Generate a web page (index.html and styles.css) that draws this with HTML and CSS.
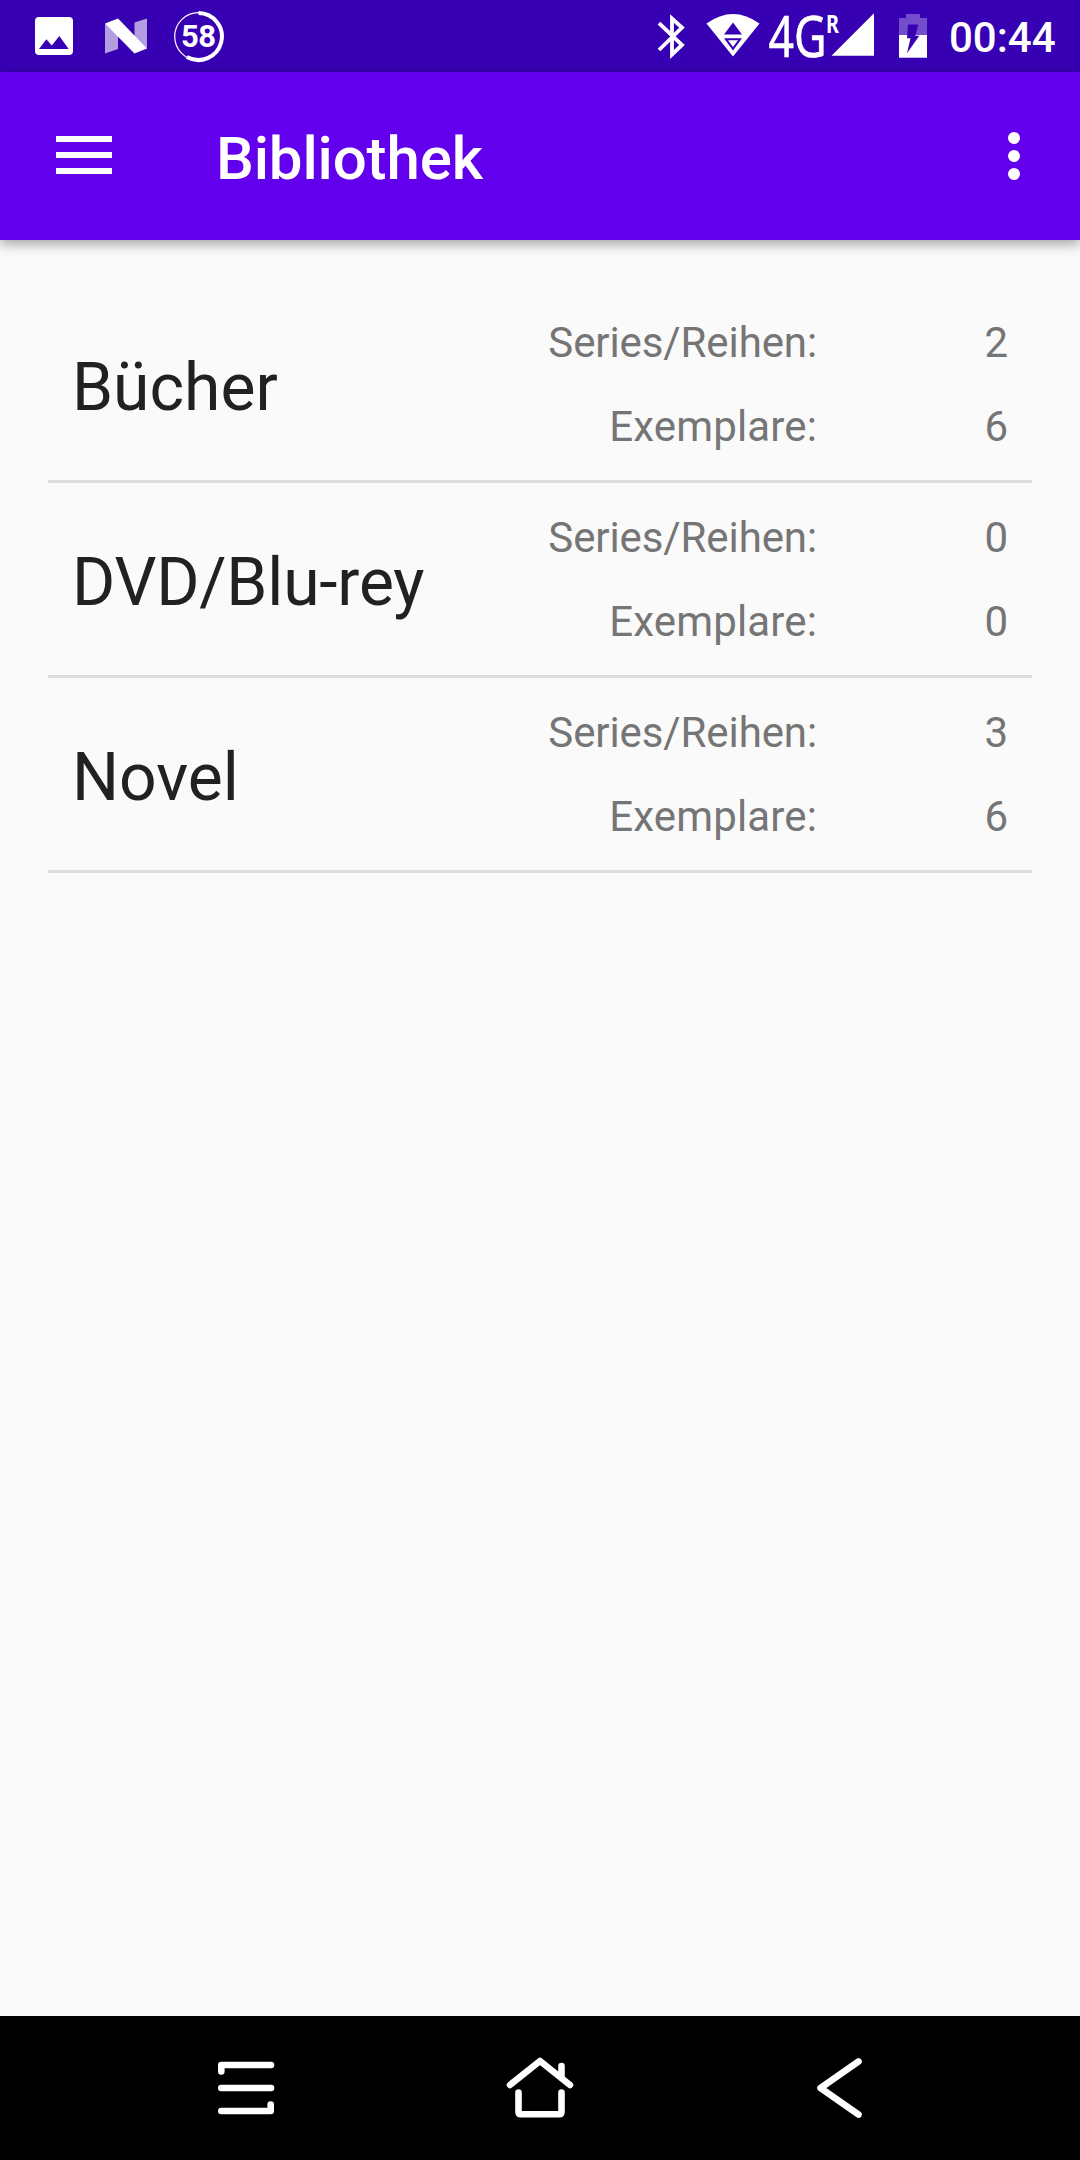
FILE: index.html
```html
<!DOCTYPE html>
<html lang="de">
<head>
<meta charset="utf-8">
<title>Bibliothek</title>
<link rel="stylesheet" href="styles.css">
</head>
<body>
<div class="screen">
  <div class="status-bar">
    <div class="status-group">
      <svg class="icon" width="38" height="72" viewBox="35 0 38 72"><path fill="#fff" fill-rule="evenodd" d="M39 17H69a4 4 0 0 1 4 4V51a4 4 0 0 1-4 4H39a4 4 0 0 1-4-4V21a4 4 0 0 1 4-4ZM39 49H68.7L59.3 36 51.8 45.6 46.4 39.2Z"/></svg>
      <svg class="icon" width="42" height="72" viewBox="105 0 42 72"><path fill="#fff" fill-opacity=".62" d="M105 23.500L118 34V49L105 53.500ZM134.500 22.500L147 18.500V49L134.500 37Z"/><path fill="#fff" d="M105 23.500L118 18.500 147 48.500 134.500 53.500Z"/></svg>
      <svg class="icon" width="52" height="72" viewBox="173 0 52 72"><circle cx="198.500" cy="36.500" r="23.800" fill="none" stroke="#fff" stroke-width="1.200"/><path d="M198.500 13A23.500 23.500 0 1 1 186.900 57" fill="none" stroke="#fff" stroke-width="4"/><text class="badge" x="198.300" y="46.700" text-anchor="middle">58</text></svg>
    </div>
    <div class="status-group status-right">
      <svg class="icon" width="30" height="72" viewBox="656 0 30 72"><path fill="none" stroke="#fff" stroke-width="3.800" d="M659 23.200L682 45 672 54.500V18.500L682 27.500 659 50"/></svg>
      <svg class="icon" width="54" height="72" viewBox="706.500 0 54 72"><path fill="#fff" d="M707 23.500Q733.500 4.500 760 23.500L733.500 56.500Z"/><path fill="#3700b3" d="M733.500 22.500L742.500 34.500H724.500ZM724.500 38.200H742.500L733.500 50.500Z"/><path fill="#fff" d="M728.500 40.300H738.500L733.500 47Z"/></svg>
      <svg class="icon network" width="106" height="72" viewBox="768 0 106 72"><text class="network-type" x="768.400" y="57" textLength="58" lengthAdjust="spacingAndGlyphs">4G</text><text class="network-roam" x="826" y="32.500" textLength="13" lengthAdjust="spacingAndGlyphs">R</text><path fill="#fff" d="M831.500 55.700L874 13.200V55.700Z"/></svg>
      <svg class="icon" width="28" height="72" viewBox="899 0 28 72"><path fill="#fff" fill-opacity=".3" d="M899 35V18H906V14H920V18H927V35Z"/><path fill="#fff" d="M899 35H927V57.700H899Z"/><path fill="#3700b3" d="M908 24.500H918.300L915.300 35.800H919.300L907 53.300 910.500 38.200H907Z"/></svg>
      <span class="clock">00:44</span>
    </div>
  </div>
  <header class="toolbar">
    <svg class="icon" width="56" height="40" viewBox="0 0 56 40"><path fill="#fff" d="M0 0H56V6H0ZM0 16H56V22H0ZM0 32H56V38H0Z"/></svg>
    <h1 class="title">Bibliothek</h1>
    <svg class="icon" width="12" height="48" viewBox="0 0 12 48"><g fill="#fff"><circle cx="6" cy="6" r="6"/><circle cx="6" cy="24" r="6"/><circle cx="6" cy="42" r="6"/></g></svg>
  </header>
  <main class="list">
    <section class="row">
      <h2 class="name">Bücher</h2>
      <div class="stats"><span class="series">Series/Reihen:</span><span>2</span><span class="copies">Exemplare:</span><span>6</span></div>
    </section>
    <section class="row">
      <h2 class="name name-long">DVD/Blu-rey</h2>
      <div class="stats"><span class="series">Series/Reihen:</span><span>0</span><span class="copies">Exemplare:</span><span>0</span></div>
    </section>
    <section class="row">
      <h2 class="name">Novel</h2>
      <div class="stats"><span class="series">Series/Reihen:</span><span>3</span><span class="copies">Exemplare:</span><span>6</span></div>
    </section>
  </main>
  <nav class="nav-bar">
    <svg class="icon" width="58" height="144" viewBox="217 2016 58 144"><path class="line" d="M221.300 2071.500V2065H271M221.300 2088H271M221.300 2111H270.700V2104.500"/></svg>
    <svg class="icon" width="68" height="144" viewBox="506 2016 68 144"><path class="line" d="M510 2085L540 2061 570 2085M561.500 2066V2078M518.500 2092.500V2112Q518.500 2114.300 521 2114.300H559Q561.500 2114.300 561.500 2112V2092.500"/></svg>
    <svg class="icon" width="48" height="144" viewBox="815 2016 48 144"><path class="line" d="M858.500 2061.500L820.500 2088 858.500 2114.500"/></svg>
  </nav>
</div>
</body>
</html>
```
FILE: styles.css
```css
* { box-sizing: border-box; }

body {
  margin: 0;
  background: #fafafa;
  font-family: Roboto, sans-serif;
}

.screen {
  display: flex;
  flex-direction: column;
  width: 1080px;
  height: 2160px;
  overflow: hidden;
}

.icon { display: block; flex: none; }

.status-bar {
  display: flex;
  justify-content: space-between;
  height: 72px;
  padding: 0 24px 0 35px;
  background: #3700b3;
  color: #fff;
}

.status-group { display: flex; align-items: center; }
.status-group .icon + .icon { margin-left: 32px; }
.status-group .icon:nth-child(3) { margin-left: 25.5px; }
.status-right .icon + .icon { margin-left: 20px; }
.status-right .icon.network { margin-left: 8px; }
.status-right .network + .icon { margin-left: 25px; }

.badge { font-size: 31px; font-weight: 700; fill: #fff; letter-spacing: -0.5px; }
.network-type { font-family: "Noto Sans", sans-serif; font-size: 56px; fill: #fff; stroke: #fff; stroke-width: 0.6px; }
.network-roam { font-family: "Noto Sans", sans-serif; font-size: 25px; font-weight: 700; fill: #fff; }

.clock {
  width: 107px;
  margin-left: 22px;
  padding-top: 4px;
  font-size: 42px;
  font-weight: 500;
  line-height: 50px;
  white-space: nowrap;
}

.toolbar {
  display: flex;
  align-items: center;
  height: 168px;
  padding: 0 60px 0 56px;
  background: #6200ee;
  color: #fff;
  box-shadow: 0 4px 12px rgba(0, 0, 0, 0.36);
}

.title {
  flex: 1;
  margin: 6px 0 0 104px;
  font-size: 60px;
  font-weight: 500;
  line-height: 70px;
  letter-spacing: -0.15px;
}

.list { flex: 1; padding: 48px 48px 0; }

.row {
  display: flex;
  justify-content: space-between;
  align-items: center;
  height: 195px;
  padding: 0 24px;
  border-bottom: 3px solid #dcdcdc;
}

.name {
  margin: 8px 0 0;
  color: #212121;
  font-size: 66px;
  font-weight: 400;
  line-height: 78px;
}

.name-long { letter-spacing: -0.2px; }

.stats {
  display: grid;
  grid-template-columns: 300px 191px;
  grid-auto-rows: 84px;
  margin-top: 2px;
  color: #757575;
  font-size: 42px;
  line-height: 84px;
  text-align: right;
}

.series { letter-spacing: -0.1px; }
.copies { letter-spacing: 0.15px; }

.nav-bar {
  display: flex;
  align-items: center;
  height: 144px;
  padding-left: 217px;
  background: #000;
}

.nav-bar .icon:nth-child(2) { margin-left: 231px; }
.nav-bar .icon:nth-child(3) { margin-left: 241px; }

.line {
  fill: none;
  stroke: #fff;
  stroke-width: 6.6px;
  stroke-linecap: round;
  stroke-linejoin: round;
}
```
